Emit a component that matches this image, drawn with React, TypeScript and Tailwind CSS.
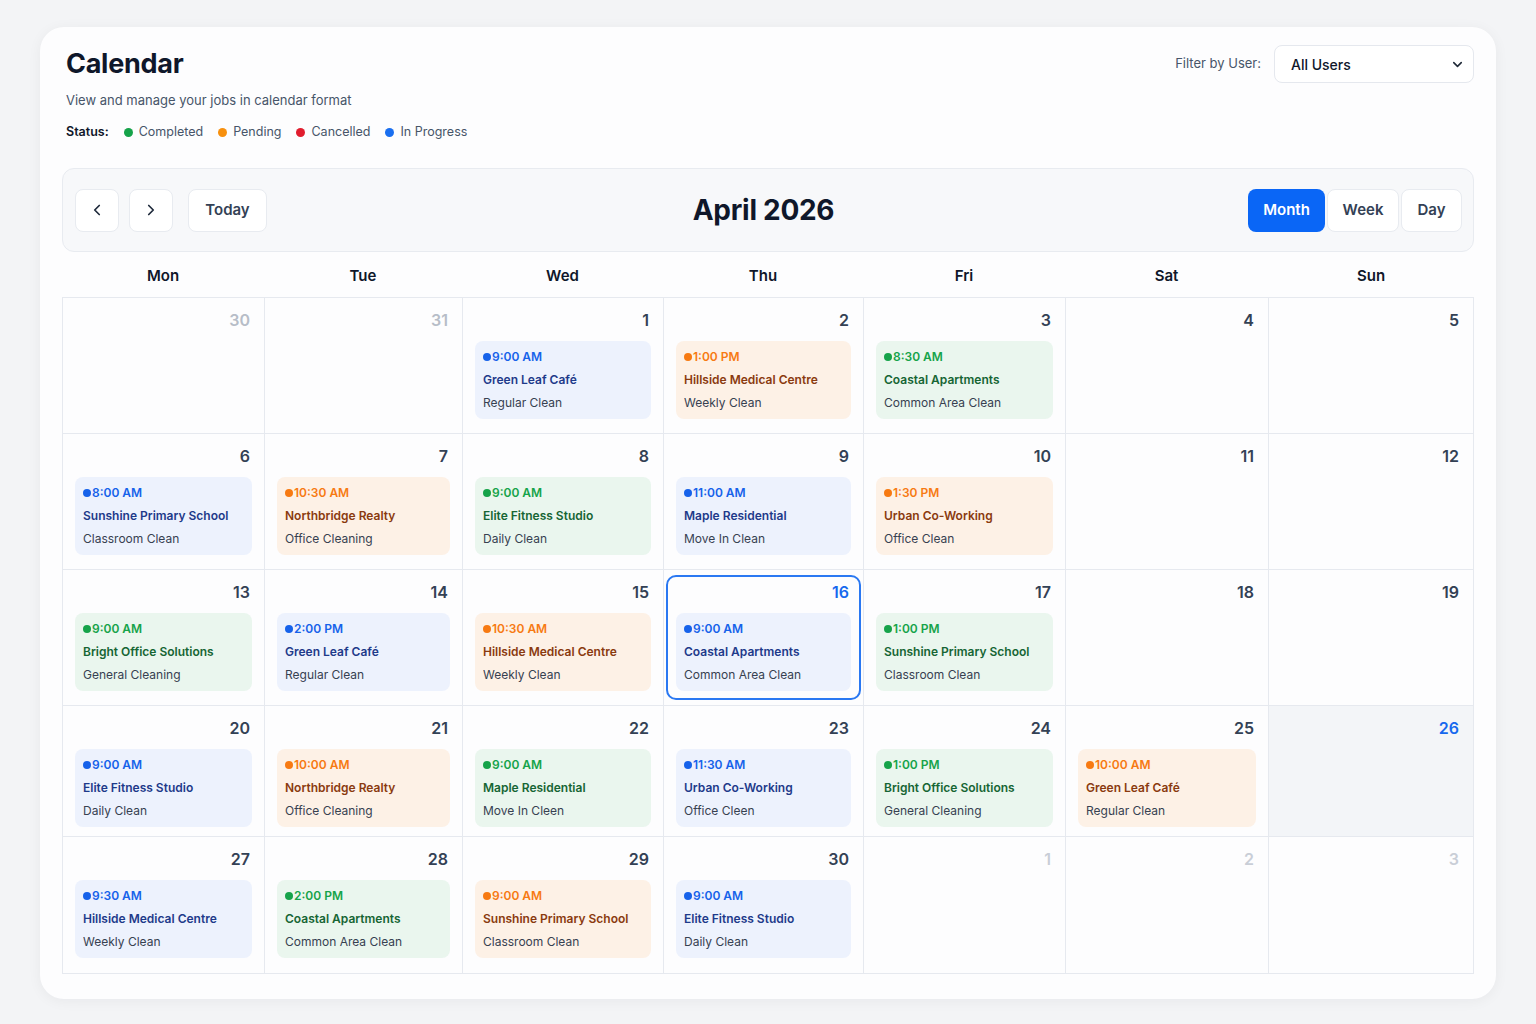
import { ChevronDown, ChevronLeft, ChevronRight } from "lucide-react";

type Status = "blue" | "orange" | "green";

type Job = {
  time: string;
  client: string;
  service: string;
  status: Status;
};

type Day = {
  date: number;
  outside?: boolean;
  faded?: boolean;
  selected?: boolean;
  today?: boolean;
  job?: Job;
};

const tones: Record<Status, { card: string; time: string; dot: string; client: string }> = {
  blue: { card: "bg-[#edf2fd]", time: "text-[#1662ea]", dot: "bg-[#1662ea]", client: "text-[#1e3a8a]" },
  orange: { card: "bg-[#fdf1e6]", time: "text-[#f77a12]", dot: "bg-[#f77a12]", client: "text-[#8a3a0f]" },
  green: { card: "bg-[#eaf6ee]", time: "text-[#16a34a]", dot: "bg-[#16a34a]", client: "text-[#166534]" },
};

const job = (time: string, client: string, service: string, status: Status): Job => ({ time, client, service, status });

const weeks: Day[][] = [
  [
    { date: 30, outside: true },
    { date: 31, outside: true },
    { date: 1, job: job("9:00 AM", "Green Leaf Café", "Regular Clean", "blue") },
    { date: 2, job: job("1:00 PM", "Hillside Medical Centre", "Weekly Clean", "orange") },
    { date: 3, job: job("8:30 AM", "Coastal Apartments", "Common Area Clean", "green") },
    { date: 4 },
    { date: 5 },
  ],
  [
    { date: 6, job: job("8:00 AM", "Sunshine Primary School", "Classroom Clean", "blue") },
    { date: 7, job: job("10:30 AM", "Northbridge Realty", "Office Cleaning", "orange") },
    { date: 8, job: job("9:00 AM", "Elite Fitness Studio", "Daily Clean", "green") },
    { date: 9, job: job("11:00 AM", "Maple Residential", "Move In Clean", "blue") },
    { date: 10, job: job("1:30 PM", "Urban Co-Working", "Office Clean", "orange") },
    { date: 11 },
    { date: 12 },
  ],
  [
    { date: 13, job: job("9:00 AM", "Bright Office Solutions", "General Cleaning", "green") },
    { date: 14, job: job("2:00 PM", "Green Leaf Café", "Regular Clean", "blue") },
    { date: 15, job: job("10:30 AM", "Hillside Medical Centre", "Weekly Clean", "orange") },
    { date: 16, selected: true, job: job("9:00 AM", "Coastal Apartments", "Common Area Clean", "blue") },
    { date: 17, job: job("1:00 PM", "Sunshine Primary School", "Classroom Clean", "green") },
    { date: 18 },
    { date: 19 },
  ],
  [
    { date: 20, job: job("9:00 AM", "Elite Fitness Studio", "Daily Clean", "blue") },
    { date: 21, job: job("10:00 AM", "Northbridge Realty", "Office Cleaning", "orange") },
    { date: 22, job: job("9:00 AM", "Maple Residential", "Move In Cleen", "green") },
    { date: 23, job: job("11:30 AM", "Urban Co-Working", "Office Cleen", "blue") },
    { date: 24, job: job("1:00 PM", "Bright Office Solutions", "General Cleaning", "green") },
    { date: 25, job: job("10:00 AM", "Green Leaf Café", "Regular Clean", "orange") },
    { date: 26, today: true },
  ],
  [
    { date: 27, job: job("9:30 AM", "Hillside Medical Centre", "Weekly Clean", "blue") },
    { date: 28, job: job("2:00 PM", "Coastal Apartments", "Common Area Clean", "green") },
    { date: 29, job: job("9:00 AM", "Sunshine Primary School", "Classroom Clean", "orange") },
    { date: 30, job: job("9:00 AM", "Elite Fitness Studio", "Daily Clean", "blue") },
    { date: 1, outside: true, faded: true },
    { date: 2, outside: true, faded: true },
    { date: 3, outside: true, faded: true },
  ],
];

const rowHeights = ["h-[136px]", "h-[136px]", "h-[136px]", "h-[131px]", "h-[137px]"];

const weekdays = ["Mon", "Tue", "Wed", "Thu", "Fri", "Sat", "Sun"];

const legend = [
  { label: "Completed", dot: "bg-[#16a34a]" },
  { label: "Pending", dot: "bg-[#f7900f]" },
  { label: "Cancelled", dot: "bg-[#e11d2e]" },
  { label: "In Progress", dot: "bg-[#1a6ff0]" },
];

// column widths follow the month layout: the last column takes what's left
const columns = "grid-cols-[202px_198px_201px_200px_202px_203px_1fr]";

function JobCard({ job }: { job: Job }) {
  const tone = tones[job.status];
  return (
    <div className={`rounded-lg ${tone.card} pl-2 pr-2 pt-1 pb-[5px] text-[12px] leading-[23px]`}>
      <div className={`flex items-center font-semibold ${tone.time}`}>
        <span className={`mr-[1px] h-[8px] w-[8px] rounded-full ${tone.dot}`} />
        {job.time}
      </div>
      <div className={`truncate font-semibold ${tone.client}`}>{job.client}</div>
      <div className="truncate text-[#374151]">{job.service}</div>
    </div>
  );
}

function DayCell({ day, height }: { day: Day; height: string }) {
  let number = "text-[#334155]";
  if (day.outside) number = day.faded ? "text-[#c9ced7]" : "text-[#b7bdc8]";
  if (day.selected || day.today) number = "text-[#1668ee]";

  return (
    <div
      className={`relative ${height} border-r border-b border-[#e6e9ef] px-3 pt-3 ${
        day.today ? "bg-[#f3f5f8]" : ""
      }`}
    >
      {day.selected && (
        <div className="pointer-events-none absolute inset-x-[2px] inset-y-[5px] rounded-[10px] border-2 border-[#2a78f2]" />
      )}
      <div className={`h-5 pr-[2px] text-right text-[16px] leading-5 font-semibold ${number}`}>{day.date}</div>
      {day.job && (
        <div className="mt-[11px]">
          <JobCard job={day.job} />
        </div>
      )}
    </div>
  );
}

export default function App() {
  return (
    <div className="min-h-screen bg-[#f3f4f6] px-[40px] pt-[27px] pb-[26px] font-['Inter',sans-serif] text-[#0f172a]">
      <div className="rounded-[24px] bg-[#fdfdfe] px-[22px] pt-[18px] pb-[25px] shadow-[0_2px_14px_rgba(15,23,42,0.05)]">
        {/* header */}
        <div className="flex items-start justify-between">
          <div className="pl-1">
            <h1 className="mt-[2px] text-[27px] leading-[34px] font-bold tracking-[-0.01em] text-[#0f172a]">Calendar</h1>
            <p className="mt-[9px] text-[13px] leading-5 text-[#475569]">View and manage your jobs in calendar format</p>
            <div className="mt-3 flex items-center text-[12.5px] leading-5">
              <span className="mr-[15px] font-semibold text-[#0f172a]">Status:</span>
              {legend.map((item) => (
                <span key={item.label} className="mr-[15px] flex items-center gap-[6px] text-[#475569]">
                  <span className={`h-[9px] w-[9px] rounded-full ${item.dot}`} />
                  {item.label}
                </span>
              ))}
            </div>
          </div>
          <div className="flex items-center gap-[13px]">
            <span className="text-[13px] text-[#475569]">Filter by User:</span>
            <div className="flex h-[38px] w-[200px] items-center justify-between rounded-lg border border-[#e5e8ee] bg-white pr-[8px] pl-4">
              <span className="text-[14px] font-medium text-[#0f172a]">All Users</span>
              <ChevronDown size={15} strokeWidth={2.5} className="text-[#1f2937]" />
            </div>
          </div>
        </div>

        {/* toolbar */}
        <div className="mt-[26px] flex h-[84px] items-center rounded-xl border border-[#e8ebf0] bg-[#f7f8fa] pr-[11px] pl-3">
          <div className="flex flex-1 items-center">
            <button className="flex h-[43px] w-[44px] items-center justify-center rounded-lg border border-[#e8ebf0] bg-white text-[#1e293b]">
              <ChevronLeft size={18} strokeWidth={2.25} />
            </button>
            <button className="ml-[10px] flex h-[43px] w-[44px] items-center justify-center rounded-lg border border-[#e8ebf0] bg-white text-[#1e293b]">
              <ChevronRight size={18} strokeWidth={2.25} />
            </button>
            <button className="ml-[15px] h-[43px] w-[79px] rounded-lg border border-[#e8ebf0] bg-white text-[15px] font-semibold text-[#334155]">
              Today
            </button>
          </div>
          <h2 className="pr-[10px] text-[28px] font-bold tracking-[-0.01em] text-[#0f172a]">April 2026</h2>
          <div className="flex flex-1 items-center justify-end gap-[2px]">
            <button className="h-[43px] w-[77px] rounded-lg bg-[#0a66f6] text-[15px] font-semibold text-white">Month</button>
            <button className="h-[43px] w-[72px] rounded-lg border border-[#e8ebf0] bg-white text-[15px] font-semibold text-[#334155]">
              Week
            </button>
            <button className="h-[43px] w-[61px] rounded-lg border border-[#e8ebf0] bg-white text-[15px] font-semibold text-[#334155]">
              Day
            </button>
          </div>
        </div>

        {/* weekday labels */}
        <div className={`grid h-[45px] ${columns} pt-[4px]`}>
          {weekdays.map((d) => (
            <div key={d} className="flex items-center justify-center text-[15px] font-semibold text-[#0f172a]">
              {d}
            </div>
          ))}
        </div>

        {/* month grid */}
        <div className={`grid ${columns} border-t border-l border-[#e6e9ef]`}>
          {weeks.map((week, w) =>
            week.map((day, i) => <DayCell key={`${w}-${i}`} day={day} height={rowHeights[w]} />)
          )}
        </div>
      </div>
    </div>
  );
}
